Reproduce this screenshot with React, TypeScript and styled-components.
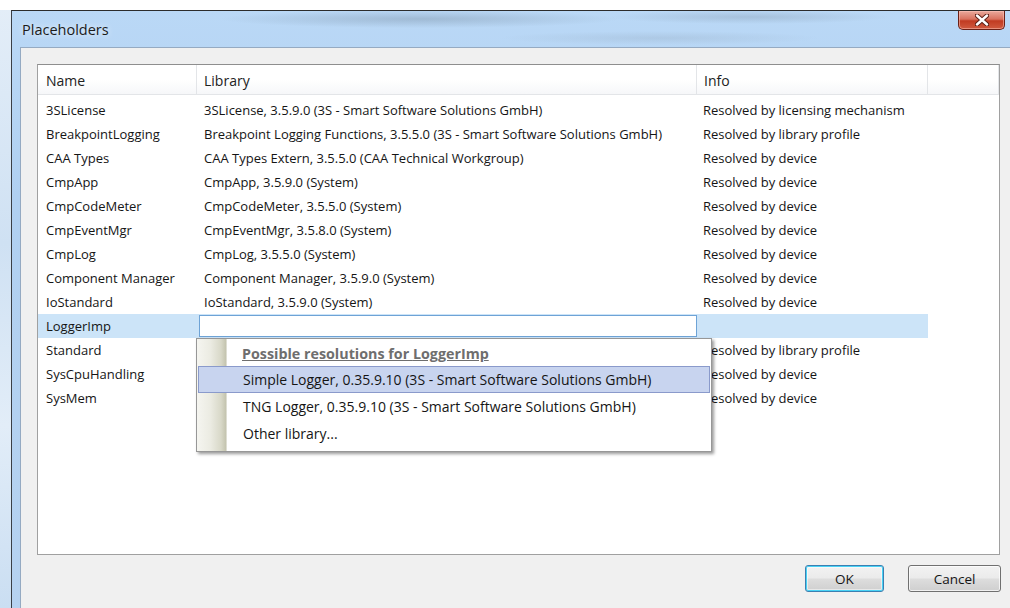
import styled, { createGlobalStyle } from "styled-components";

const GlobalStyle = createGlobalStyle`
  html, body {
    margin: 0;
    padding: 0;
    background: #ffffff;
  }
  body {
    font-family: "Open Sans", "Noto Sans", "DejaVu Sans", sans-serif;
    font-size: 13px;
    color: #151515;
  }
`;

interface Placeholder {
  name: string;
  library: string;
  info: string;
}

const placeholders: Placeholder[] = [
  { name: "3SLicense", library: "3SLicense, 3.5.9.0 (3S - Smart Software Solutions GmbH)", info: "Resolved by licensing mechanism" },
  { name: "BreakpointLogging", library: "Breakpoint Logging Functions, 3.5.5.0 (3S - Smart Software Solutions GmbH)", info: "Resolved by library profile" },
  { name: "CAA Types", library: "CAA Types Extern, 3.5.5.0 (CAA Technical Workgroup)", info: "Resolved by device" },
  { name: "CmpApp", library: "CmpApp, 3.5.9.0 (System)", info: "Resolved by device" },
  { name: "CmpCodeMeter", library: "CmpCodeMeter, 3.5.5.0 (System)", info: "Resolved by device" },
  { name: "CmpEventMgr", library: "CmpEventMgr, 3.5.8.0 (System)", info: "Resolved by device" },
  { name: "CmpLog", library: "CmpLog, 3.5.5.0 (System)", info: "Resolved by device" },
  { name: "Component Manager", library: "Component Manager, 3.5.9.0 (System)", info: "Resolved by device" },
  { name: "IoStandard", library: "IoStandard, 3.5.9.0 (System)", info: "Resolved by device" },
  { name: "LoggerImp", library: "", info: "" },
  { name: "Standard", library: "", info: "Resolved by library profile" },
  { name: "SysCpuHandling", library: "", info: "Resolved by device" },
  { name: "SysMem", library: "", info: "Resolved by device" },
];

const resolutions = [
  "Simple Logger, 0.35.9.10 (3S - Smart Software Solutions GmbH)",
  "TNG Logger, 0.35.9.10 (3S - Smart Software Solutions GmbH)",
  "Other library...",
];

const EDITING = "LoggerImp";

const App = () => {
  return (
    <>
      <GlobalStyle />
      <Desktop>
        <Window>
          <TitleBar>
            <Title>Placeholders</Title>
            <CloseButton>
              <svg width="14" height="12" viewBox="0 0 14 12">
                <path
                  d="M2 1.5 L12 10.5 M12 1.5 L2 10.5"
                  stroke="#5a1d14"
                  strokeWidth="4.4"
                  strokeLinecap="round"
                />
                <path
                  d="M2 1.5 L12 10.5 M12 1.5 L2 10.5"
                  stroke="#ffffff"
                  strokeWidth="2.4"
                  strokeLinecap="round"
                />
              </svg>
            </CloseButton>
          </TitleBar>
          <Client>
            <ListBox>
              <HeaderRow>
                <HeaderCell>Name</HeaderCell>
                <HeaderCell>Library</HeaderCell>
                <HeaderCell>Info</HeaderCell>
                <HeaderCell />
              </HeaderRow>
              <Body>
                {placeholders.map((p) => {
                  const editing = p.name === EDITING;
                  return (
                    <Row key={p.name} selected={editing}>
                      <Cell>{p.name}</Cell>
                      <LibraryCell>
                        {editing ? (
                          <>
                            <EditBox />
                            <Popup>
                              <Gutter />
                              <PopupHeader>
                                Possible resolutions for {p.name}
                              </PopupHeader>
                              {resolutions.map((r, i) => (
                                <PopupItem key={r} active={i === 0}>
                                  {r}
                                </PopupItem>
                              ))}
                            </Popup>
                          </>
                        ) : (
                          p.library
                        )}
                      </LibraryCell>
                      <Cell>{p.info}</Cell>
                    </Row>
                  );
                })}
              </Body>
            </ListBox>
            <Footer>
              <Button isDefault>OK</Button>
              <Button>Cancel</Button>
            </Footer>
          </Client>
        </Window>
      </Desktop>
    </>
  );
};

const Desktop = styled.div`
  width: 1010px;
  height: 608px;
  overflow: hidden;
  padding: 10px 0 0 11px;
  box-sizing: border-box;
  background:
    linear-gradient(180deg, #ffffff 0, #ffffff 10px, transparent 10px),
    linear-gradient(180deg, #e4eef8 0%, #cfe1f3 40%, #e2edf8 70%, #cadef2 100%);
`;

const Window = styled.div`
  width: 999px;
  height: 620px;
  display: flex;
  flex-direction: column;
  border-top: 1px solid #2c2c2c;
  border-left: 1px solid #3a3f46;
  padding-left: 8px;
  box-sizing: border-box;
  background: linear-gradient(180deg, #bad8f6 0%, #b0d0f1 30%, #b6d2f0 100%);
`;

const TitleBar = styled.div`
  height: 36px;
  display: flex;
  align-items: flex-start;
  justify-content: space-between;
  padding-right: 5px;
  background:
    radial-gradient(ellipse 200px 9px at 400px 8px, rgba(110, 130, 150, 0.35), transparent),
    radial-gradient(ellipse 140px 7px at 730px 6px, rgba(120, 140, 160, 0.3), transparent),
    radial-gradient(ellipse 160px 7px at 640px 27px, rgba(140, 160, 180, 0.25), transparent);
`;

const Title = styled.div`
  margin-top: 9px;
  margin-left: 2px;
  font-size: 14.5px;
  color: #1b1b1b;
  text-shadow: 0 0 6px rgba(255, 255, 255, 0.9);
`;

const CloseButton = styled.div`
  width: 47px;
  height: 19px;
  display: flex;
  align-items: center;
  justify-content: center;
  box-sizing: border-box;
  border: 1px solid #6a2016;
  border-top: none;
  border-radius: 0 0 5px 5px;
  background: linear-gradient(180deg, #e9a99c 0%, #d8725f 45%, #c13b22 55%, #d05a3f 100%);
  box-shadow: inset 0 0 0 1px rgba(255, 200, 190, 0.5);
`;

const Client = styled.div`
  flex: 1;
  display: flex;
  flex-direction: column;
  background: #f0f0f0;
  border-top: 1px solid #95aac2;
  border-left: 1px solid #95aac2;
  padding: 16px 8px 0 16px;
`;

const ListBox = styled.div`
  width: 963px;
  height: 491px;
  box-sizing: border-box;
  border: 1px solid #a0a0a0;
  border-top-color: #8e8e8e;
  background: #ffffff;
`;

const columns = "159px 500px 231px 1fr";

const HeaderRow = styled.div`
  display: grid;
  grid-template-columns: ${columns};
  height: 29px;
  border-bottom: 1px solid #e3e5e8;
  background: linear-gradient(180deg, #ffffff 0%, #ffffff 50%, #f6f7f9 100%);
`;

const HeaderCell = styled.div`
  display: flex;
  align-items: center;
  padding: 2px 0 0 8px;
  border-right: 1px solid #e3e5e8;
  color: #222;
  font-size: 14px;

  &:nth-child(2),
  &:nth-child(3) {
    padding-left: 7px;
  }
`;

const Body = styled.div`
  padding-top: 3px;
`;

const Row = styled.div<{ selected?: boolean }>`
  display: grid;
  grid-template-columns: 159px 500px 231px;
  height: 24px;
  background: ${(props) => (props.selected ? "#cce4f8" : "transparent")};
  width: 890px;
`;

const Cell = styled.div`
  display: flex;
  align-items: center;
  padding-left: 8px;
  white-space: nowrap;
  overflow: visible;

  &:last-child {
    padding-left: 6px;
  }
`;

const LibraryCell = styled(Cell)`
  position: relative;
  padding-left: 7px;
`;

const EditBox = styled.div`
  position: absolute;
  left: 2px;
  top: 1px;
  width: 498px;
  height: 22px;
  box-sizing: border-box;
  border: 1px solid #6ea3d6;
  background: #ffffff;
`;

const Popup = styled.div`
  position: absolute;
  left: -1px;
  top: 24px;
  width: 516px;
  height: 114px;
  box-sizing: border-box;
  border: 1px solid #979797;
  background: #ffffff;
  box-shadow: 2px 2px 3px rgba(0, 0, 0, 0.4);
  padding-top: 1px;
  z-index: 2;
`;

const Gutter = styled.div`
  position: absolute;
  left: 0;
  top: 0;
  bottom: 0;
  width: 30px;
  background: linear-gradient(90deg, #f5f5f0 0%, #ebebe2 45%, #d8d8c8 80%, #c3c3ae 97%, #ffffff 100%);
`;

const PopupHeader = styled.div`
  position: relative;
  height: 26px;
  display: flex;
  align-items: center;
  padding-left: 45px;
  font-weight: 700;
  font-size: 14.3px;
  color: #6e6e6e;
  text-decoration: underline;
`;

const PopupItem = styled.div<{ active?: boolean }>`
  position: relative;
  height: 27px;
  display: flex;
  align-items: center;
  margin: 0 1px;
  padding-left: 44px;
  box-sizing: border-box;
  font-size: 14px;
  color: #151515;
  border: 1px solid ${(props) => (props.active ? "#8a9acb" : "transparent")};
  background: ${(props) => (props.active ? "#c8d4ef" : "transparent")};
`;

const Footer = styled.div`
  display: flex;
  justify-content: flex-end;
  gap: 24px;
  padding: 10px 1px 0 0;
`;

const Button = styled.div<{ isDefault?: boolean }>`
  width: ${(props) => (props.isDefault ? "79px" : "93px")};
  height: 27px;
  box-sizing: border-box;
  display: flex;
  align-items: center;
  justify-content: center;
  border: 1px solid ${(props) => (props.isDefault ? "#3c7fb1" : "#707070")};
  border-radius: 3px;
  background: linear-gradient(180deg, #f2f2f2 0%, #ebebeb 48%, #dddddd 52%, #cfcfcf 100%);
  box-shadow: ${(props) =>
    props.isDefault
      ? "inset 0 0 0 1px #48d2f5, inset 0 0 0 2px rgba(255,255,255,0.5)"
      : "inset 0 0 0 1px rgba(255,255,255,0.7)"};
  color: #151515;
  font-size: 13.5px;
`;

export default App;
